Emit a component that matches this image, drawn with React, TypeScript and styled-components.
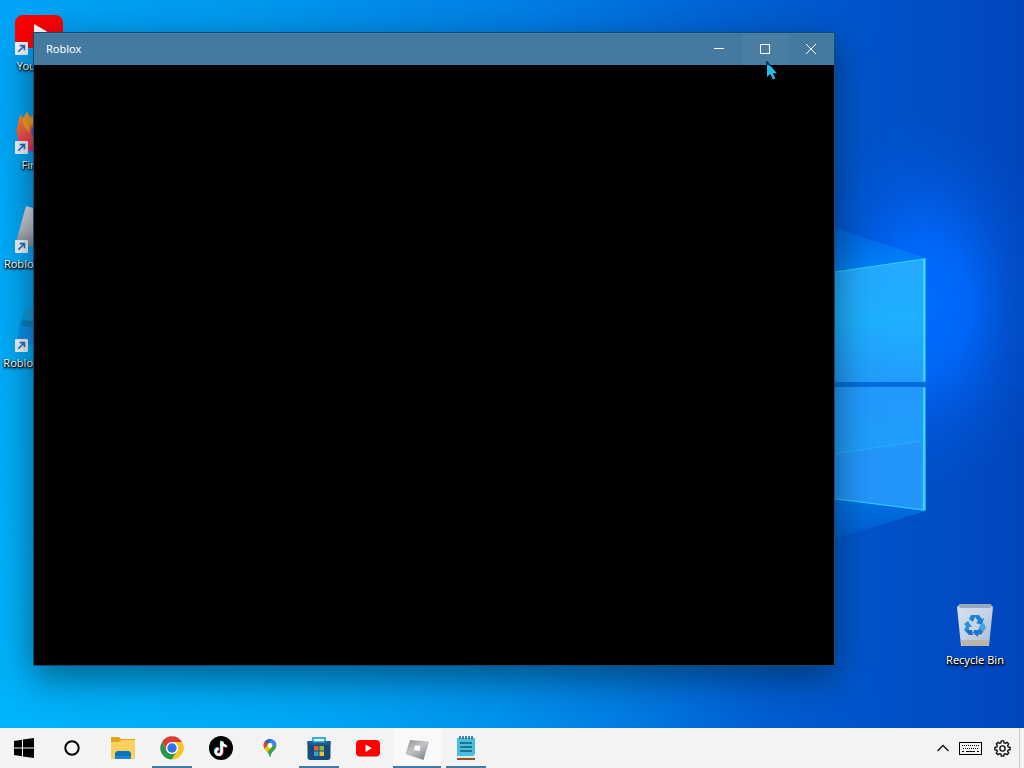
import React from "react";
import styled, { createGlobalStyle } from "styled-components";

const GlobalStyle = createGlobalStyle`
  * { box-sizing: border-box; }
  html, body { margin: 0; padding: 0; }
  body { font-family: "Noto Sans", "Open Sans", sans-serif; font-size: 12px; overflow: hidden; }
  button { font: inherit; border: 0; padding: 0; margin: 0; background: none; color: inherit; }
`;

const Shell = styled.div`
  height: 100vh;
  display: flex;
  flex-direction: column;
`;

const Desktop = styled.main`
  position: relative;
  flex: 1;
  min-height: 0;
  display: flex;
  justify-content: space-between;
  overflow: hidden;
  background: #0078e0;
`;

const Wallpaper = styled.svg`
  position: absolute;
  inset: 0;
  width: 100%;
  height: 100%;
`;

const IconColumn = styled.nav<{ $end?: boolean }>`
  position: relative;
  display: flex;
  flex-direction: column;
  justify-content: ${(p) => (p.$end ? "flex-end" : "flex-start")};
  padding: ${(p) => (p.$end ? "0 10px 35px 0" : "0")};
`;

const Shortcut = styled.button`
  width: 78px;
  height: 99px;
  padding-top: 7px;
  display: flex;
  flex-direction: column;
  align-items: center;
  gap: 3px;
`;

const ShortcutArt = styled.span`
  position: relative;
  width: 48px;
  height: 48px;
  svg { display: block; }
`;

const ArrowBadge = styled.svg`
  position: absolute;
  left: 0;
  bottom: 0;
`;

const ShortcutLabel = styled.span`
  color: #fff;
  font-size: 11px;
  line-height: 16px;
  white-space: nowrap;
  text-shadow: 0 1px 2px #000, 1px 1px 1px #000, 0 2px 3px rgba(0, 0, 0, 0.6);
`;

const AppWindow = styled.section`
  position: absolute;
  inset: 32px 189px 62px 33px;
  display: flex;
  flex-direction: column;
  border: 1px solid #174a6c;
  background: #000;
  box-shadow: 0 12px 36px rgba(0, 30, 40, 0.55);
`;

const TitleBar = styled.header`
  display: flex;
  align-items: center;
  height: 32px;
  padding-left: 12px;
  background: #447a9f;
  color: #fff;
`;

const Title = styled.h1`
  flex: 1;
  margin: 0;
  font-size: 11px;
  font-weight: 400;
  line-height: 16px;
`;

const CaptionButton = styled.button<{ $hover?: boolean }>`
  width: 46px;
  height: 32px;
  display: grid;
  place-items: center;
  background: ${(p) => (p.$hover ? "#4a7da2" : "transparent")};
`;

const Viewport = styled.div`
  flex: 1;
  background: #000;
`;

const Pointer = styled.svg`
  position: absolute;
  top: 61px;
  right: 246px;
`;

const Taskbar = styled.footer`
  flex: none;
  height: 40px;
  display: flex;
  justify-content: space-between;
  background: #f3f3f3;
`;

const TaskGroup = styled.div`
  display: flex;
`;

const PinnedApps = styled.div`
  display: flex;
  gap: 1px;
  margin-left: 3px;
`;

const TaskButton = styled.button<{ $state?: "open" | "active" }>`
  position: relative;
  width: 48px;
  height: 40px;
  display: grid;
  place-items: center;
  background: ${(p) => (p.$state === "active" ? "#f9f9f9" : "transparent")};
  svg { display: block; }
  &::after {
    content: "";
    position: absolute;
    bottom: 0;
    left: ${(p) => (p.$state === "active" ? "0" : "4px")};
    right: ${(p) => (p.$state === "active" ? "0" : "4px")};
    height: ${(p) => (p.$state ? "2px" : "0")};
    background: #4379a2;
  }
`;

const Tray = styled.div`
  display: flex;
  align-items: center;
  gap: 10px;
`;

const TrayButton = styled.button`
  display: grid;
  place-items: center;
  height: 40px;
  &:nth-of-type(3) { margin-left: 2px; }
`;

const ShowDesktop = styled.button`
  width: 5px;
  height: 40px;
  margin-left: -2px;
  border-left: 1px solid #c4c4c4;
`;

function WallpaperArt() {
  return (
    <Wallpaper viewBox="0 0 1024 728" preserveAspectRatio="none" aria-hidden="true">
      <defs>
        <linearGradient id="sky">
          <stop offset="0" stopColor="#00a5f8" />
          <stop offset="0.25" stopColor="#0099f0" />
          <stop offset="0.5" stopColor="#0080e6" />
          <stop offset="0.7" stopColor="#0064d8" />
          <stop offset="0.84" stopColor="#0054cc" />
          <stop offset="1" stopColor="#0245bd" />
        </linearGradient>
        <linearGradient id="floor" x1="0" y1="0" x2="0" y2="1">
          <stop offset="0" stopColor="#00b6fb" stopOpacity="0" />
          <stop offset="1" stopColor="#00b6fb" stopOpacity="1" />
        </linearGradient>
        <linearGradient id="fade">
          <stop offset="0" stopColor="#fff" stopOpacity="0.9" />
          <stop offset="0.35" stopColor="#fff" stopOpacity="0.5" />
          <stop offset="0.75" stopColor="#fff" stopOpacity="0" />
        </linearGradient>
        <mask id="left"><rect width="1024" height="728" fill="url(#fade)" /></mask>
        <radialGradient id="halo">
          <stop offset="0" stopColor="#006cff" />
          <stop offset="0.35" stopColor="#006aff" stopOpacity="0.85" />
          <stop offset="0.7" stopColor="#0062ee" stopOpacity="0.3" />
          <stop offset="1" stopColor="#005ce4" stopOpacity="0" />
        </radialGradient>
        <linearGradient id="paneTop" x1="0" y1="0" x2="0" y2="1">
          <stop offset="0" stopColor="#25a8ff" />
          <stop offset="0.5" stopColor="#1eb0ff" />
          <stop offset="1" stopColor="#229cfb" />
        </linearGradient>
        <linearGradient id="paneLow" x1="0" y1="0" x2="0" y2="1">
          <stop offset="0" stopColor="#2299fd" />
          <stop offset="1" stopColor="#1da4fc" />
        </linearGradient>
        <linearGradient id="beamUp" x1="0" y1="1" x2="0" y2="0">
          <stop offset="0" stopColor="#0090fa" stopOpacity="0.85" />
          <stop offset="1" stopColor="#0078f4" stopOpacity="0.15" />
        </linearGradient>
        <linearGradient id="beamDown" x1="0" y1="0" x2="0" y2="1">
          <stop offset="0" stopColor="#0077e8" stopOpacity="0.95" />
          <stop offset="1" stopColor="#0074e4" stopOpacity="0.1" />
        </linearGradient>
      </defs>
      <rect width="1024" height="728" fill="url(#sky)" />
      <rect width="1024" height="728" fill="url(#floor)" mask="url(#left)" />
      <ellipse cx="925" cy="305" rx="125" ry="190" fill="url(#halo)" />
      <path d="M780 210 926 258 780 280Z" fill="url(#beamUp)" />
      <path d="M780 492 926 511 780 555Z" fill="url(#beamDown)" />
      <path d="M780 280 926 258V382H780Z" fill="url(#paneTop)" />
      <path d="M780 382H926V387H780Z" fill="#006fdc" />
      <path d="M780 387H926V511L780 492Z" fill="url(#paneLow)" />
      <path d="M780 462 921 441V509L780 492Z" fill="#2496fb" />
      <path d="M780 462 921 441" stroke="#26b1fb" fill="none" />
      <path d="M780 280 924 259V382M924 387V510L780 492" stroke="#30ccff" strokeWidth="1" fill="none" />
      <path d="M924 259V381M924 388V510" stroke="#3dd8ff" strokeWidth="2" fill="none" />
    </Wallpaper>
  );
}

const Arrow = () => (
  <ArrowBadge width="13" height="13" viewBox="0 0 13 13" aria-hidden="true">
    <rect width="13" height="13" rx="1" fill="#f5f8fc" />
    <path d="M3.3 9.8 9 4M4.7 3.6H9.4V8.3" fill="none" stroke="#1d6dbb" strokeWidth="1.6" />
  </ArrowBadge>
);

const YouTubeArt = ({ size }: { size: number }) => (
  <svg width={size} height={size} viewBox="0 0 48 48" aria-hidden="true">
    <rect y="8" width="48" height="33" rx="8" fill="#f00" />
    <path d="M19 17 32 24.5 19 32Z" fill="#fff" />
  </svg>
);

const FirefoxArt = () => (
  <svg width="48" height="48" viewBox="0 0 48 48" aria-hidden="true">
    <defs>
      <linearGradient id="fox" x1="0.3" y1="0" x2="0.5" y2="1">
        <stop offset="0" stopColor="#ff9b2e" />
        <stop offset="0.45" stopColor="#ff6139" />
        <stop offset="1" stopColor="#f5156c" />
      </linearGradient>
    </defs>
    <path d="M3 19C3 14 4 11 6 9L8 12C9 10 10 8 12 6L15 11C20 7 25 3 29 2 31 8 45 12 46 26A22 20 0 0 1 2 28C1 24 2 21 3 19Z" fill="url(#fox)" />
    <path d="M8 13 12 6 15 12C18 11 21 12 23 15L17 18C14 20 13 24 16 27 10 24 7 18 8 13Z" fill="#ffa21f" />
    <path d="M24 18A8 8 0 0 0 16 25C16 29 19 33 24 33Z" fill="#7143b8" />
  </svg>
);

const RobloxArt = () => (
  <svg width="48" height="48" viewBox="0 0 48 48" aria-hidden="true">
    <defs>
      <linearGradient id="metal" x1="0" y1="0" x2="0" y2="1">
        <stop offset="0" stopColor="#e6e6ea" />
        <stop offset="0.5" stopColor="#c2c2c8" />
        <stop offset="0.8" stopColor="#96969c" />
        <stop offset="1" stopColor="#85868c" />
      </linearGradient>
    </defs>
    <path d="M11 1 47 11 37 47 1 37Z" fill="url(#metal)" />
    <path d="M22 18 31 20 28 31 19 29Z" fill="#fff" />
  </svg>
);

const StudioArt = () => (
  <svg width="48" height="48" viewBox="0 0 48 48" aria-hidden="true">
    <path d="M11 2 46 13 43 30 5 20Z" fill="#0c9fde" />
    <path d="M5 20 43 28 37 46 2 37Z" fill="#0a90ea" />
    <path d="M8 15 42 24 41 29 5 21Z" fill="#0b80c4" />
  </svg>
);

const BinArt = () => (
  <svg width="48" height="48" viewBox="0 0 48 48" aria-hidden="true">
    <defs>
      <linearGradient id="bin" x1="0" y1="0" x2="1" y2="1">
        <stop offset="0" stopColor="#d5e1f0" />
        <stop offset="0.5" stopColor="#c6d3e4" />
        <stop offset="1" stopColor="#acb9cb" />
      </linearGradient>
    </defs>
    <path d="M6 6 9 3H39L42 6 38 45H10Z" fill="url(#bin)" />
    <path d="M7 5 10 3H38L41 5 39 7H9Z" fill="#99a6bc" />
    <path d="M10 39H38L37 45H11Z" fill="#bcb4ab" />
    <g fill="#1b83d5">
      <path d="M18 18 20 14H28L31 18 33 17 31 24 25 22 27 20 24 16 22 21Z" />
      <path d="M17 20 21 26 18 26 18 29 21 31 18 34 13 29 15 25 13 23Z" fill="#2a91de" />
      <path d="M23 29H27L29 26 33 28 31 33 27 34V36L22 32Z" fill="#2477c6" />
      <path d="M29 24 33 22 35 27 32 31 28 27Z" fill="#43a3e8" />
      <path d="M15 29 21 29 22 34H18Z" fill="#1b6fbd" />
    </g>
  </svg>
);

const desktopApps = [
  { label: "YouTube", art: <YouTubeArt size={48} /> },
  { label: "Firefox", art: <FirefoxArt /> },
  { label: "Roblox Player", art: <RobloxArt /> },
  { label: "Roblox Studio", art: <StudioArt /> },
];

const FolderIcon = () => (
  <svg width="24" height="22" viewBox="0 0 24 22" aria-hidden="true">
    <path d="M0 0H8L10 2H24V21H0Z" fill="#e2a31d" />
    <path d="M0 5H8L10 3H24V22H0Z" fill="#fbd05c" />
    <path d="M4 22V16L6 14H18L20 16V22Z" fill="#0e72bd" />
    <path d="M4 19H20V22H4Z" fill="#1c86cc" />
  </svg>
);

const ChromeIcon = () => (
  <svg width="24" height="24" viewBox="0 0 24 24" aria-hidden="true">
    <circle cx="12" cy="12" r="11" fill="#fff" />
    <path d="M12 6H22A11.5 11.5 0 0 0 2 6L6.8 15 12 12Z" fill="#dd3b30" />
    <path d="M22 6A11.5 11.5 0 0 1 11.7 23.5L17.2 15A6 6 0 0 0 12 6Z" fill="#f9c425" />
    <path d="M2 6A11.5 11.5 0 0 0 11.7 23.5L17.2 15A6 6 0 0 1 6.8 15Z" fill="#279847" />
    <circle cx="12" cy="12" r="6" fill="#fff" />
    <circle cx="12" cy="12" r="4.7" fill="#2f72ed" />
  </svg>
);

const TikTokIcon = () => (
  <svg width="24" height="24" viewBox="0 0 24 24" aria-hidden="true">
    <circle cx="12" cy="12" r="12" fill="#000" />
    <g fill="none" strokeWidth="2.4">
      <path d="M12 5V15.3A3 3 0 1 1 9 12.3M12.3 5C12.5 8 14.5 9.5 17 9.6" stroke="#25e8e2" />
      <path d="M13.4 6V16.3A3 3 0 1 1 10.4 13.3M13.7 6C14 9 16 10.4 18.3 10.6" stroke="#f52f58" />
      <path d="M12.7 5.4V15.8A3 3 0 1 1 9.7 12.8M13 5.4C13.2 8.5 15.2 10 17.7 10.1" stroke="#fff" />
    </g>
  </svg>
);

const MapsIcon = () => (
  <svg width="14" height="18" viewBox="0 0 14 18" aria-hidden="true">
    <defs>
      <clipPath id="pin"><path d="M7 0A6.4 6.4 0 0 1 13.4 6.4C13.4 11 8.3 12 7.5 17.4Q7 18.6 6.5 17.4C5.7 12 .6 11 .6 6.4A6.4 6.4 0 0 1 7 0Z" /></clipPath>
    </defs>
    <g clipPath="url(#pin)">
      <rect width="14" height="18" fill="#34a351" />
      <path d="M0 0H9L5 5 2 3Z" fill="#1c65d1" />
      <path d="M0 2 2 2 5 5 0 11Z" fill="#e5402f" />
      <path d="M9 0H14V4L10 8 7 3Z" fill="#4286f0" />
      <path d="M0 11 4 7 9 8 3 15Z" fill="#fbbd09" />
    </g>
    <circle cx="7" cy="6.4" r="2.4" fill="#fff" />
  </svg>
);

const StoreIcon = () => (
  <svg width="24" height="24" viewBox="0 0 24 24" aria-hidden="true">
    <path d="M6 7V2H18V7" fill="none" stroke="#2fb3dc" strokeWidth="2" />
    <path d="M0.5 5H23.5V21Q23.5 24 20.5 24H3.5Q.5 24 .5 21Z" fill="#164a7a" />
    <path d="M0.5 5H23.5V9H.5Z" fill="#1a5f92" />
    <path d="M6 5H18V6.5H6Z" fill="#2fb3dc" />
    <rect x="7" y="10" width="4.5" height="4.5" fill="#ef5a35" />
    <rect x="12.5" y="10" width="4.5" height="4.5" fill="#84bc35" />
    <rect x="7" y="15.5" width="4.5" height="4.5" fill="#22a9e5" />
    <rect x="12.5" y="15.5" width="4.5" height="4.5" fill="#fbbc23" />
  </svg>
);

const RobloxTaskIcon = () => (
  <svg width="24" height="24" viewBox="0 0 24 24" aria-hidden="true">
    <defs>
      <linearGradient id="steel" x1="0" y1="0" x2="0.7" y2="1">
        <stop offset="0" stopColor="#8f9396" />
        <stop offset="0.5" stopColor="#c2c5c7" />
        <stop offset="1" stopColor="#858a8f" />
      </linearGradient>
    </defs>
    <path d="M5 4 24 5.5 18.5 24 .5 18Z" fill="url(#steel)" />
    <path d="M10 9.5 15.5 10 14.5 15 9 14Z" fill="#fff" />
  </svg>
);

const NotepadIcon = () => (
  <svg width="20" height="24" viewBox="0 0 20 24" aria-hidden="true">
    <rect x="1" y="2" width="18" height="20" fill="#49bfdc" />
    <path d="M1 21H19V24H1Z" fill="#a04f1a" />
    <path d="M1 20H17L19 18V22H1Z" fill="#d5eef3" />
    <path d="M4 0V3M7 0V3M10 0V3M13 0V3M16 0V3" stroke="#17647f" strokeWidth="1.5" />
    <path d="M4 7H16M4 11H16M4 15H16" stroke="#125a77" strokeWidth="1.6" />
  </svg>
);

const apps: { name: string; icon: React.ReactNode; state?: "open" | "active" }[] = [
  { name: "File Explorer", icon: <FolderIcon /> },
  { name: "Chrome", icon: <ChromeIcon />, state: "open" },
  { name: "TikTok", icon: <TikTokIcon /> },
  { name: "Maps", icon: <MapsIcon /> },
  { name: "Store", icon: <StoreIcon />, state: "open" },
  { name: "YouTube", icon: <YouTubeArt size={24} /> },
  { name: "Roblox", icon: <RobloxTaskIcon />, state: "active" },
  { name: "Notepad", icon: <NotepadIcon />, state: "open" },
];

const gearPath = (() => {
  const points: string[] = [];
  const radii = [5.9, 7.7, 7.7, 5.9];
  const offsets = [-15, -9, 9, 15];
  for (let tooth = 0; tooth < 8; tooth++) {
    offsets.forEach((offset, i) => {
      const angle = ((tooth * 45 + offset) * Math.PI) / 180;
      points.push(`${(8.5 + radii[i] * Math.cos(angle)).toFixed(2)} ${(8.5 + radii[i] * Math.sin(angle)).toFixed(2)}`);
    });
  }
  return `M${points.join("L")}Z`;
})();

export default function App() {
  return (
    <Shell>
      <GlobalStyle />
      <Desktop>
        <WallpaperArt />
        <IconColumn aria-label="Desktop shortcuts">
          {desktopApps.map((app) => (
            <Shortcut key={app.label}>
              <ShortcutArt>
                {app.art}
                <Arrow />
              </ShortcutArt>
              <ShortcutLabel>{app.label}</ShortcutLabel>
            </Shortcut>
          ))}
        </IconColumn>
        <IconColumn $end aria-label="System shortcuts">
          <Shortcut>
            <ShortcutArt><BinArt /></ShortcutArt>
            <ShortcutLabel>Recycle Bin</ShortcutLabel>
          </Shortcut>
        </IconColumn>
        <AppWindow aria-label="Roblox">
          <TitleBar>
            <Title>Roblox</Title>
            <CaptionButton aria-label="Minimize">
              <svg width="10" height="10" viewBox="0 0 10 10"><path d="M0 4.5H10" stroke="#fff" /></svg>
            </CaptionButton>
            <CaptionButton aria-label="Maximize" $hover>
              <svg width="10" height="10" viewBox="0 0 10 10"><rect x="0.5" y="0.5" width="9" height="9" fill="none" stroke="#fff" /></svg>
            </CaptionButton>
            <CaptionButton aria-label="Close">
              <svg width="10" height="10" viewBox="0 0 10 10"><path d="M0 0 10 10M10 0 0 10" stroke="#fff" /></svg>
            </CaptionButton>
          </TitleBar>
          <Viewport />
        </AppWindow>
        <Pointer width="12" height="20" viewBox="0 0 12 20" aria-hidden="true">
          <path d="M1 1V16L4.3 13 7 18.5 9.3 17.4 6.8 12.2H11Z" fill="#24bce8" />
          <path d="M1 4V1L4 4.5" fill="none" stroke="#082c63" strokeWidth="1.5" />
        </Pointer>
      </Desktop>
      <Taskbar>
        <TaskGroup>
          <TaskButton aria-label="Start">
            <svg width="20" height="20" viewBox="0 0 20 20">
              <path d="M0 3 8 1.8V9.4H0ZM9 1.6 20 0V9.4H9ZM0 10.4H8V18.2L0 17ZM9 10.4H20V20L9 18.4Z" fill="#000" />
            </svg>
          </TaskButton>
          <TaskButton aria-label="Cortana">
            <svg width="16" height="16" viewBox="0 0 16 16"><circle cx="8" cy="8" r="6.7" fill="none" stroke="#000" strokeWidth="2" /></svg>
          </TaskButton>
          <PinnedApps>
            {apps.map((app) => (
              <TaskButton key={app.name} aria-label={app.name} $state={app.state}>{app.icon}</TaskButton>
            ))}
          </PinnedApps>
        </TaskGroup>
        <Tray>
          <TrayButton aria-label="Show hidden icons">
            <svg width="12" height="8" viewBox="0 0 12 8"><path d="M0.5 7 6 1.5 11.5 7" fill="none" stroke="#111" strokeWidth="1.3" /></svg>
          </TrayButton>
          <TrayButton aria-label="Touch keyboard">
            <svg width="23" height="13" viewBox="0 0 23 13">
              <rect x="0.5" y="0.5" width="22" height="12" fill="none" stroke="#000" />
              <path d="M3 3.5H20M4 6.5H20" stroke="#000" strokeDasharray="1 1" />
              <path d="M3 9.5H5M7 9.5H16M18 9.5H20" stroke="#000" />
            </svg>
          </TrayButton>
          <TrayButton aria-label="Settings">
            <svg width="17" height="17" viewBox="0 0 17 17">
              <path d={gearPath} fill="none" stroke="#111" strokeWidth="1.4" strokeLinejoin="round" />
              <circle cx="8.5" cy="8.5" r="2.6" fill="none" stroke="#111" strokeWidth="1.4" />
            </svg>
          </TrayButton>
          <ShowDesktop aria-label="Show desktop" />
        </Tray>
      </Taskbar>
    </Shell>
  );
}
